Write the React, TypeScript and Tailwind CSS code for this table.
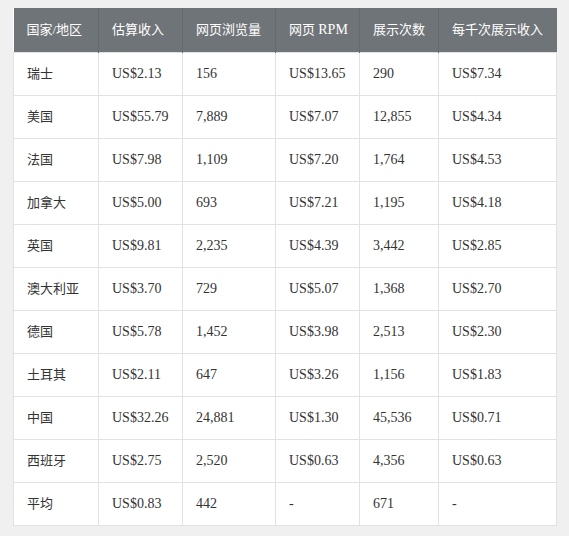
const headers = ['国家/地区', '估算收入', '网页浏览量', '网页 RPM', '展示次数', '每千次展示收入'];

const rows: string[][] = [
  ['瑞士', 'US$2.13', '156', 'US$13.65', '290', 'US$7.34'],
  ['美国', 'US$55.79', '7,889', 'US$7.07', '12,855', 'US$4.34'],
  ['法国', 'US$7.98', '1,109', 'US$7.20', '1,764', 'US$4.53'],
  ['加拿大', 'US$5.00', '693', 'US$7.21', '1,195', 'US$4.18'],
  ['英国', 'US$9.81', '2,235', 'US$4.39', '3,442', 'US$2.85'],
  ['澳大利亚', 'US$3.70', '729', 'US$5.07', '1,368', 'US$2.70'],
  ['德国', 'US$5.78', '1,452', 'US$3.98', '2,513', 'US$2.30'],
  ['土耳其', 'US$2.11', '647', 'US$3.26', '1,156', 'US$1.83'],
  ['中国', 'US$32.26', '24,881', 'US$1.30', '45,536', 'US$0.71'],
  ['西班牙', 'US$2.75', '2,520', 'US$0.63', '4,356', 'US$0.63'],
  ['平均', 'US$0.83', '442', '-', '671', '-'],
];

const widths = ['w-[85px]', 'w-[84px]', 'w-[93px]', 'w-[84px]', 'w-[79px]', 'w-[118px]'];

export default function App() {
  return (
    <div className="min-h-[536px] w-[569px] bg-[#f0f0f0] pl-[13px] pt-[8px] font-['Georgia','Liberation_Serif','Noto_Sans_CJK_SC',serif] text-[14px] text-[#333]">
      <table className="w-[544px] table-fixed border-collapse bg-white">
        <thead>
          <tr className="h-[44px] bg-[#6f7478] text-white">
            {headers.map((h, i) => (
              <th
                key={h}
                className={`${widths[i]} whitespace-nowrap border-r border-[#656a6e] px-[13px] text-left text-[13px] font-normal last:border-r-0`}
              >
                {h === '网页 RPM' ? (
                  <>
                    网页 <span className="text-[14px]">RPM</span>
                  </>
                ) : (
                  h
                )}
              </th>
            ))}
          </tr>
        </thead>
        <tbody>
          {rows.map((r) => (
            <tr key={r[0]} className="h-[43px]">
              {r.map((c, i) => (
                <td
                  key={i}
                  className={`whitespace-nowrap border border-[#e2e2e2] px-[13px] ${i === 0 ? 'text-[13px]' : ''}`}
                >
                  {c}
                </td>
              ))}
            </tr>
          ))}
        </tbody>
      </table>
    </div>
  );
}
